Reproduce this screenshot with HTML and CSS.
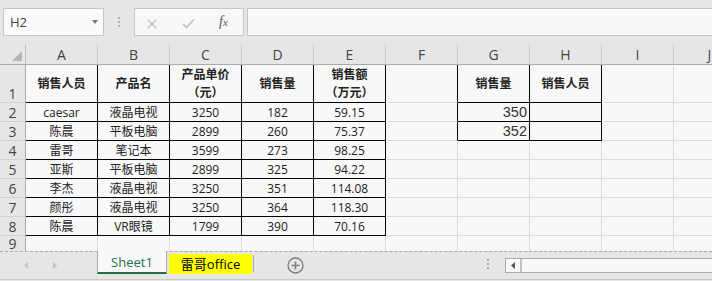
FILE: index.html
```html
<!DOCTYPE html>
<html>
<head>
  <meta charset="utf-8">
  <title>销售统计</title>
  <link rel="stylesheet" href="styles.css">
</head>
<body>
  <div class="app">
    <div class="formula-bar">
      <div class="name-box">H2<span class="caret"></span></div>
      <div class="grip"><i></i><i></i><i></i></div>
      <div class="fx-box">
        <svg class="ico-x" width="10" height="10" viewBox="0 0 10 10"><path d="M1 1 L9 9 M9 1 L1 9" stroke="#b7b7b7" stroke-width="1.2" fill="none"/></svg>
        <svg class="ico-ok" width="13" height="11" viewBox="0 0 13 11"><path d="M1 6 L4.5 9.5 L12 1.5" stroke="#bdbdbd" stroke-width="1.6" fill="none"/></svg>
        <span class="fx">f<span>x</span></span>
      </div>
      <div class="formula-input"></div>
    </div>

    <div class="sheet">
      <table class="grid">
        <colgroup>
          <col class="col-rh">
          <col><col><col><col><col><col><col><col><col><col>
        </colgroup>
        <tr class="hdr">
          <th class="corner"><span class="tri"></span></th>
          <th>A</th><th>B</th><th>C</th><th>D</th><th>E</th>
          <th>F</th><th>G</th><th>H</th><th>I</th><th>J</th>
        </tr>
        <tr class="tall">
          <th class="rh kr">1</th>
          <td class="k bold">销售人员</td>
          <td class="k bold">产品名</td>
          <td class="k bold">产品单价<br>（元）</td>
          <td class="k bold">销售量</td>
          <td class="k bold">销售额<br>（万元）</td>
          <td class="kr"></td>
          <td class="k bold">销售量</td>
          <td class="k bold">销售人员</td>
          <td></td><td></td>
        </tr>
        <tr>
          <th class="rh kr">2</th>
          <td class="k">caesar</td><td class="k">液晶电视</td><td class="k">3250</td><td class="k">182</td><td class="k">59.15</td>
          <td class="kr"></td><td class="k num">350</td><td class="k"></td><td></td><td></td>
        </tr>
        <tr>
          <th class="rh kr">3</th>
          <td class="k">陈晨</td><td class="k">平板电脑</td><td class="k">2899</td><td class="k">260</td><td class="k">75.37</td>
          <td class="kr"></td><td class="k num">352</td><td class="k"></td><td></td><td></td>
        </tr>
        <tr>
          <th class="rh kr">4</th>
          <td class="k">雷哥</td><td class="k">笔记本</td><td class="k">3599</td><td class="k">273</td><td class="k">98.25</td>
          <td></td><td></td><td></td><td></td><td></td>
        </tr>
        <tr>
          <th class="rh kr">5</th>
          <td class="k">亚斯</td><td class="k">平板电脑</td><td class="k">2899</td><td class="k">325</td><td class="k">94.22</td>
          <td></td><td></td><td></td><td></td><td></td>
        </tr>
        <tr>
          <th class="rh kr">6</th>
          <td class="k">李杰</td><td class="k">液晶电视</td><td class="k">3250</td><td class="k">351</td><td class="k">114.08</td>
          <td></td><td></td><td></td><td></td><td></td>
        </tr>
        <tr>
          <th class="rh kr">7</th>
          <td class="k">颜彤</td><td class="k">液晶电视</td><td class="k">3250</td><td class="k">364</td><td class="k">118.30</td>
          <td></td><td></td><td></td><td></td><td></td>
        </tr>
        <tr>
          <th class="rh kr">8</th>
          <td class="k">陈晨</td><td class="k">VR眼镜</td><td class="k">1799</td><td class="k">390</td><td class="k">70.16</td>
          <td></td><td></td><td></td><td></td><td></td>
        </tr>
        <tr class="last">
          <th class="rh"><span class="rn">9</span></th>
          <td></td><td></td><td></td><td></td><td></td>
          <td></td><td></td><td></td><td></td><td></td>
        </tr>
      </table>
    </div>

    <div class="tabbar">
      <div class="nav">
        <svg class="nav-l" width="4" height="7" viewBox="0 0 4 7"><path d="M4 0 L0 3.5 L4 7 Z" fill="#c2c2c2"/></svg>
        <svg class="nav-r" width="4" height="7" viewBox="0 0 4 7"><path d="M0 0 L4 3.5 L0 7 Z" fill="#c2c2c2"/></svg>
      </div>
      <div class="tab active">Sheet1</div>
      <div class="tab yellow">雷哥office</div>
      <span class="tab-sep"></span>
      <svg class="add" width="17" height="17" viewBox="0 0 17 17">
        <circle cx="8.5" cy="8.5" r="7.5" stroke="#7d7d7d" stroke-width="1.3" fill="none"/>
        <path d="M8.5 4.5 V12.5 M4.5 8.5 H12.5" stroke="#7d7d7d" stroke-width="1.6"/>
      </svg>
      <div class="grip vgrip"><i></i><i></i><i></i></div>
      <div class="hscroll">
        <span class="scroll-btn"><svg width="4" height="7" viewBox="0 0 4 7"><path d="M4 0 L0 3.5 L4 7 Z" fill="#555"/></svg></span>
      </div>
    </div>
  </div>
</body>
</html>
```

FILE: styles.css
```css
body {
  margin: 0;
  background: #e6e6e6;
  font-family: "Open Sans", "Noto Sans CJK SC", sans-serif;
}

.app {
  width: 712px;
  height: 281px;
  overflow: hidden;
}

/* formula bar */

.formula-bar {
  display: flex;
  align-items: flex-start;
  height: 45px;
  box-sizing: border-box;
  padding-top: 8px;
}

.name-box {
  display: flex;
  align-items: center;
  justify-content: space-between;
  box-sizing: border-box;
  width: 101px;
  height: 28px;
  margin-left: 3px;
  padding: 0 5px 0 6px;
  border: 1px solid #c6c6c6;
  background: #fafafa;
  font-size: 13px;
  color: #444;
}

.caret {
  width: 0;
  height: 0;
  border-left: 3.5px solid transparent;
  border-right: 3.5px solid transparent;
  border-top: 4px solid #777;
}

.grip {
  display: flex;
  flex-direction: column;
  gap: 2px;
  margin-left: 14px;
  margin-top: 9px;
}

.grip i {
  display: block;
  width: 2px;
  height: 2px;
  background: #b3b3b3;
}

.fx-box {
  display: flex;
  align-items: flex-start;
  box-sizing: border-box;
  width: 110px;
  height: 28px;
  margin-left: 14px;
  border: 1px solid #c6c6c6;
  background: #f8f8f8;
}

.ico-x {
  margin: 10px 0 0 12px;
}

.ico-ok {
  margin: 9px 0 0 25px;
}

.fx {
  margin: 5px 0 0 24px;
  font-family: "Liberation Serif", serif;
  font-style: italic;
  font-size: 14px;
  color: #555;
}

.fx span {
  font-size: 11px;
}

.formula-input {
  flex: 1;
  box-sizing: border-box;
  height: 28px;
  margin-left: 3px;
  margin-right: -5px;
  border: 1px solid #c6c6c6;
  background: #f8f8f8;
}

/* sheet grid */

.sheet {
  height: 206px;
}

.grid {
  table-layout: fixed;
  border-collapse: separate;
  border-spacing: 0;
  width: 746px;
}

.grid col {
  width: 72px;
}

.grid col.col-rh {
  width: 26px;
}

.grid th,
.grid td {
  box-sizing: border-box;
  padding: 0;
  overflow: hidden;
  white-space: nowrap;
}

.grid th {
  background: #e6e6e6;
  font-weight: normal;
  font-size: 14px;
  color: #444;
  line-height: 17px;
  border-right: 1px solid #c9c9c9;
  border-bottom: 1px solid #d2d2d2;
}

.hdr th {
  height: 20px;
  border-bottom: 1px solid #ababab;
}

.hdr th.corner {
  position: relative;
  border-right-color: #bdbdbd;
}

.tri {
  position: absolute;
  right: 3px;
  bottom: 3px;
  width: 0;
  height: 0;
  border-left: 10px solid transparent;
  border-bottom: 10px solid #b5b5b5;
}

.grid td {
  height: 19px;
  background: #f8f8f8;
  border-right: 1px solid #dadada;
  border-bottom: 1px solid #dadada;
  text-align: center;
  font-size: 12px;
  line-height: 17px;
  color: #222;
}

.grid tr.tall td,
.grid tr.tall th {
  height: 38px;
}

.grid tr.tall th {
  vertical-align: bottom;
}

.grid tr.last td,
.grid tr.last th {
  height: 15px;
  border-bottom: none;
}

.grid tr.last th {
  vertical-align: top;
  overflow: visible;
}

.rn {
  display: block;
  height: 15px;
  line-height: 15px;
}

.grid th.rh {
  border-right-color: #ababab;
}

.grid .kr {
  border-right-color: #000;
}

.grid td.k {
  border-right-color: #000;
  border-bottom-color: #000;
}

.grid td.bold {
  font-weight: bold;
  white-space: normal;
  line-height: 18px;
}

.grid td.num {
  text-align: right;
  padding-right: 2px;
  font-family: "Liberation Sans", sans-serif;
  font-size: 14.5px;
  color: #333;
}

/* sheet tabs */

.tabbar {
  display: flex;
  align-items: flex-start;
  height: 29px;
  box-sizing: border-box;
  border-top: 1px dashed #a9a9a9;
  border-bottom: 1px solid #c9c9c9;
}

.nav {
  display: flex;
  width: 97px;
  padding-top: 10px;
}

.nav-l {
  margin-left: 24px;
}

.nav-r {
  margin-left: 25px;
}

.tab {
  box-sizing: border-box;
  text-align: center;
  font-size: 13px;
}

.tab.active {
  width: 70px;
  height: 23px;
  margin-top: -1px;
  line-height: 22px;
  background: #f8f8f8;
  border-left: 1px solid #ababab;
  border-right: 1px solid #ababab;
  border-bottom: 2px solid #217346;
  color: #217346;
}

.tab.yellow {
  width: 83px;
  height: 20px;
  margin-left: 2px;
  margin-top: 2px;
  line-height: 20px;
  background: #ffff00;
  color: #000;
}

.tab-sep {
  width: 1px;
  height: 17px;
  margin-left: 1px;
  margin-top: 3px;
  background: #ababab;
}

.add {
  margin-left: 33px;
  margin-top: 5px;
}

.vgrip {
  margin-left: 183px;
  margin-top: 7px;
}

.vgrip i {
  background: #a5a5a5;
}

.hscroll {
  flex: 1;
  display: flex;
  box-sizing: border-box;
  height: 15px;
  margin-left: 16px;
  margin-top: 6px;
  margin-right: -10px;
  border: 1px solid #ababab;
  background: #f8f8f8;
}

.scroll-btn {
  display: flex;
  align-items: center;
  justify-content: center;
  width: 14px;
  border-right: 2px solid #c2c2c2;
}
```
